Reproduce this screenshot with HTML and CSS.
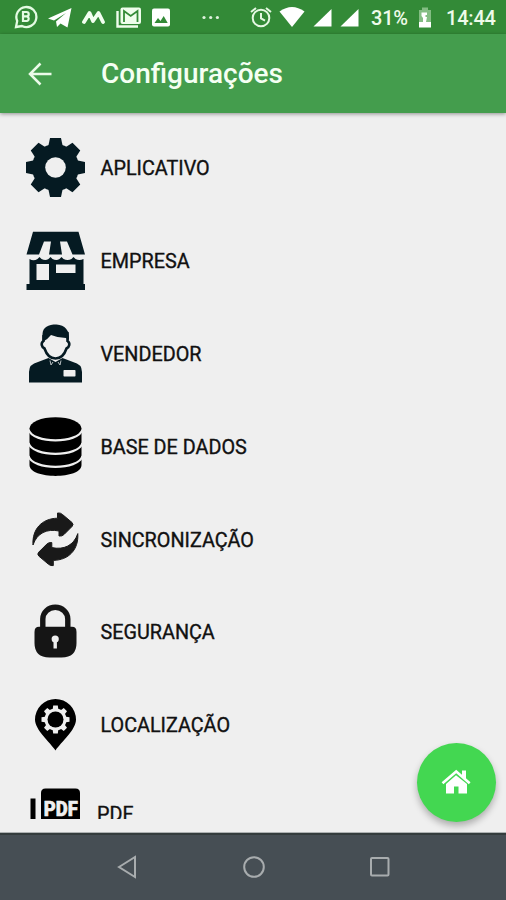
FILE: index.html
```html
<!DOCTYPE html>
<html lang="pt-BR">
<head>
<meta charset="utf-8">
<title>Configurações</title>
<link rel="stylesheet" href="styles.css">
</head>
<body>
<div class="screen">
  <header class="status">
    <div class="notifications">
      <svg width="24" height="24" viewBox="0 0 24 24"><path d="M2 22l1.200-6A10 10 0 1 1 8 21z" fill="none" stroke="#e4fbe3" stroke-width="2.300"/><path d="M9 7v9h4a2.400 2.400 0 0 0 0-4.600H9h3.500A2.200 2.200 0 0 0 12.500 7z" fill="none" stroke="#e4fbe3" stroke-width="2.200"/></svg>
      <svg width="24" height="24" viewBox="0 0 24 24"><path d="M0 13.500 23.500 3 19.500 22.500 12.500 18.500 9 22 8 16.500 18 8 6 15.500z" fill="#fff"/></svg>
      <svg width="24" height="24" viewBox="0 0 24 24"><path d="M2 17 7.500 8 11 16 16.500 8 21 17" fill="none" stroke="#f2fff0" stroke-width="3.800" stroke-linejoin="round" stroke-linecap="round"/></svg>
      <svg width="26" height="24" viewBox="0 0 26 24"><path d="M1.500 6v15.500H22" fill="none" stroke="#effdec" stroke-width="2.400"/><rect x="4.500" y="2.500" width="20.500" height="16.500" rx="2" fill="#effdec"/><path d="M8 17V6l6.700 5L21.500 6v11" fill="none" stroke="#338a37" stroke-width="1.800"/></svg>
      <svg width="20" height="24" viewBox="1 0 20 24"><rect x="1" y="3.500" width="18" height="18" rx="2" fill="#fff"/><path d="M3.500 18 7 13l2.500 3 3.200-5 4 7z" fill="#338a37"/></svg>
      <svg class="more" width="20" height="24" viewBox="0 0 20 24"><g fill="#dff2dd"><circle cx="3" cy="12.500" r="1.600"/><circle cx="9.700" cy="12.500" r="1.600"/><circle cx="16.400" cy="12.500" r="1.600"/></g></svg>
    </div>
    <div class="system">
      <svg width="22" height="24" viewBox="0 0 22 24"><g fill="none" stroke="#e5f8e3" stroke-width="2"><circle cx="11" cy="13" r="8.300"/><path d="M11 8v5.500l4 2.200M1 7l5-4M21 7l-5-4"/></g></svg>
      <svg class="wifi" width="26" height="24" viewBox="0 0 26 24"><path d="M.5 6.500Q13-2.500 25.500 6.500L13 22z" fill="#fff"/></svg>
      <svg class="signal" width="19" height="24" viewBox="0 0 19 24"><path d="M.5 21.500 18.500 4v17.500z" fill="#fff"/></svg>
      <svg class="signal second" width="19" height="24" viewBox="0 0 19 24"><path d="M.5 21.500 18.500 4v17.500z" fill="#fff"/></svg>
      <span class="percent">31%</span>
      <svg class="battery" width="14" height="24" viewBox="0 0 14 24"><path d="M1 5h3V2.500h6V5h3v12H1z" fill="#83bd83"/><path d="M1 17h4v-4l-1.500-2V7.500H9V10H7.500v2H9L8 17h5v5.500H1z" fill="#fff"/></svg>
      <span class="clock">14:44</span>
    </div>
  </header>
  <div class="appbar">
    <svg class="back" width="24" height="24" viewBox="0 0 24 24"><path d="M23.500 12H2M12.500 1.500 2 12l10.500 10.500" fill="none" stroke="#ebfae9" stroke-width="2.500"/></svg>
    <h1>Configurações</h1>
  </div>
  <main>
    <ul class="list">
      <li><svg class="icon" viewBox="0 0 60 60"><g transform="translate(30.500 29.500)" fill="#051a22"><circle r="23.500"/><path id="tooth" d="M-7.500-20-5.500-29.500H5.500L7.500-20V20L5.500 29.500h-11L-7.500 20z"/><use href="#tooth" transform="rotate(45)"/><use href="#tooth" transform="rotate(90)"/><use href="#tooth" transform="rotate(135)"/><circle r="10.300" fill="#efefef"/></g></svg><span>APLICATIVO</span></li>
      <li><svg class="icon" viewBox="0 0 60 60"><g fill="#051a22"><path d="M8 .8H53.500L60 23.500H47.500L42 10.500H35L37 23.500H24L26 10.500H19L14 23.500H1.500z"/><path d="M4.500 28q4 2.500 8 0l2-2 2 2q4 2 7 0l2-2 2 2q4 2 7 0l2-2 2 2q4 2 8 0l2-2 2 2q4 2 8 0V53H60v6H1.500v-6h3z"/></g><path fill="#efefef" d="M11.500 33h12.500v16H11.500zM31 33.500h19.500v8.500H31z"/></svg><span>EMPRESA</span></li>
      <li><svg class="icon" viewBox="0 0 60 60"><path d="M4 58.500V48q0-8 9-10l10.500-4L30.500 38 37.500 34 48 38q9 2 9 10v10.500z" fill="#051a22"/><path d="M18.500 17c-3 2-2 6 1 7.500 2 6 6 10 11 10s9-4 11-10c3-1.500 4-5.500 1-7.500V9q-12-6-24 3z" fill="#efefef" stroke="#051a22" stroke-width="2.600"/><path d="M17.500 18V10C18 3 23 .5 31.500.5 40 1 44.500 6 44 16l-3-2q-8 0-15-3-3 4-8.500 7z" fill="#051a22"/><path d="m25 36.500 1 4.500 2-3M36 36.500l-1 4.500-2-3" stroke="#b9c0c2" fill="none" stroke-width="1"/><rect x="38.500" y="46" width="12" height="6.500" rx=".7" fill="#efefef"/></svg><span>VENDEDOR</span></li>
      <li><svg class="icon" viewBox="0 0 60 60"><path d="M4.500 12v36c0 14.500 52 14.500 52 0V12z"/><ellipse cx="30.500" cy="11.500" rx="26" ry="11.300"/><g fill="none" stroke="#efefef" stroke-width="2.200"><path d="M3.500 12.500c4 14.500 50 14.500 54 0M3.500 26c4 14.500 50 14.500 54 0M3.500 39c4 14.500 50 14.500 54 0"/></g></svg><span>BASE DE DADOS</span></li>
      <li><svg class="icon" viewBox="0 0 60 60"><g fill="#191919" stroke="#191919" stroke-linejoin="round"><path id="arrow" d="M8 35C7 19 17 8.500 32.500 8.200V3q3-.5 5 1.500l9.500 8q2 2 0 4l-8 8q-2 2-5 1.500V21C22 18.500 12 23 8 35z"/><use href="#arrow" transform="rotate(180 30.400 29.300)"/></g></svg><span>SINCRONIZAÇÃO</span></li>
      <li><svg class="icon" viewBox="0 0 60 60"><path d="M17.800 27V17a12.500 11.700 0 0 1 25 0v10" fill="none" stroke="#151515" stroke-width="5.400"/><path d="M14 24.700h33q4.500 0 4.500 5V41q0 14.500-15 14.500h-12q-15 0-15-14.500V29.700q0-5 4.500-5z" fill="#151515"/><circle cx="30.200" cy="37" r="3.600" fill="#efefef"/><path d="M28.500 38h3.400v8.500h-3.400z" fill="#efefef"/></svg><span>SEGURANÇA</span></li>
      <li><svg class="icon" viewBox="0 0 60 60"><path d="M30.500 55.500C25 47 10 35 10 24.500a20.500 20.500 0 0 1 41 0C51 35 36 47 30.500 55.500z"/><g transform="translate(30.500 24.500)" fill="#efefef"><circle r="11"/><path id="cog" d="M-3-9-2.300-14H2.300L3-9V9L2.300 14h-4.600L-3 9z"/><use href="#cog" transform="rotate(45)"/><use href="#cog" transform="rotate(90)"/><use href="#cog" transform="rotate(135)"/><circle r="8" fill="#000"/></g></svg><span>LOCALIZAÇÃO</span></li>
      <li class="pdf"><svg class="icon" viewBox="0 0 60 60"><path d="M5.500 10.500h5V60h-5zM16 60V5q0-4.500 4.500-4.500h30Q55 .5 55 5v55z"/><text class="badge" x="18.800" y="27.500" textLength="34" lengthAdjust="spacingAndGlyphs">PDF</text></svg><span>PDF</span></li>
    </ul>
    <button class="fab" aria-label="Início"><svg width="30" height="26" viewBox="0 0 30 26"><path d="M15 6.200 5 15v9.500h8v-7h4.500v7H26V15z" fill="#fff"/><path d="M1.500 14.200 15.200 2.500 28.700 14.200" fill="none" stroke="#fff" stroke-width="2.600"/><path d="M21 1.500h4V11l-4-3.500z" fill="#fff"/></svg></button>
  </main>
  <nav>
    <svg width="22" height="24" viewBox="0 0 22 24"><path d="M3 12 19 2v20z"/></svg>
    <svg width="24" height="24" viewBox="0 0 24 24"><circle cx="12" cy="12" r="9.800"/></svg>
    <svg width="22" height="24" viewBox="0 0 22 24"><rect x="2" y="3" width="17.500" height="17.500" rx="1"/></svg>
  </nav>
</div>
</body>
</html>
```
FILE: styles.css
```css
* { box-sizing: border-box; }
body { margin: 0; background: #efefef; font-family: Roboto, "Liberation Sans", sans-serif; }
svg { display: block; flex: none; }
.screen { width: 506px; height: 900px; display: flex; flex-direction: column; overflow: hidden; }
.status { height: 34px; flex: none; display: flex; justify-content: space-between; background: #338a37; color: #eefbea; padding: 5px 10px 0 14px; }
.notifications, .system { display: flex; align-items: center; height: 24px; }
.notifications { gap: 10px; }
.more { margin-left: 19px; }
.wifi { margin-left: 7px; }
.signal { margin-left: 8px; }
.signal.second { margin-left: 8px; }
.percent, .clock { font-size: 20px; font-weight: 500; line-height: 24px; padding-top: 2px; letter-spacing: -.2px; }
.percent { width: 37px; margin-left: 12px; }
.battery { margin-left: 10px; }
.clock { width: 50px; margin-left: 14px; }
.appbar { height: 79px; flex: none; display: flex; align-items: center; background: #449d4d; padding: 0 28px; box-shadow: 0 1px 4px rgba(0,0,0,.4); position: relative; }
.appbar h1 { margin: 1px 0 0 49px; font-size: 28px; line-height: 32px; font-weight: 500; color: #f5fff3; }
main { height: 720px; flex: none; padding: 8px 0 14px; border-bottom: 1px solid #aeb2b3; position: relative; }
.list { list-style: none; margin: 0; padding: 1px 25px 0; height: 698px; overflow: hidden; }
.list li { height: 92.8px; display: flex; align-items: center; gap: 15.5px; font-size: 19.8px; font-weight: 400; color: #111; -webkit-text-stroke: .35px #111; white-space: nowrap; }
.list li span { padding-top: 1px; }
.icon { width: 60px; height: 60px; -webkit-text-stroke: 0; }
.list .pdf { height: 60px; gap: 12px; margin-top: 16px; }
.list .pdf .icon { align-self: flex-start; }
.list .pdf span { padding: 0 0 7px; }
.badge { font-weight: 900; font-size: 21px; fill: #efefef; stroke: #efefef; stroke-width: .6px; }
.fab { position: absolute; left: 416.5px; top: 629.5px; width: 79px; height: 79px; border: 0; border-radius: 50%; background: #43d751; display: flex; align-items: center; justify-content: center; padding: 0; box-shadow: 0 4px 7px rgba(0,0,0,.28); }
nav { height: 67px; flex: none; display: flex; justify-content: space-between; align-items: center; padding: 0 115px 2px 116px; background: #464e54; border-top: 2px solid #343c3d; }
nav svg { fill: none; stroke: #a8acae; stroke-width: 2; }
```
